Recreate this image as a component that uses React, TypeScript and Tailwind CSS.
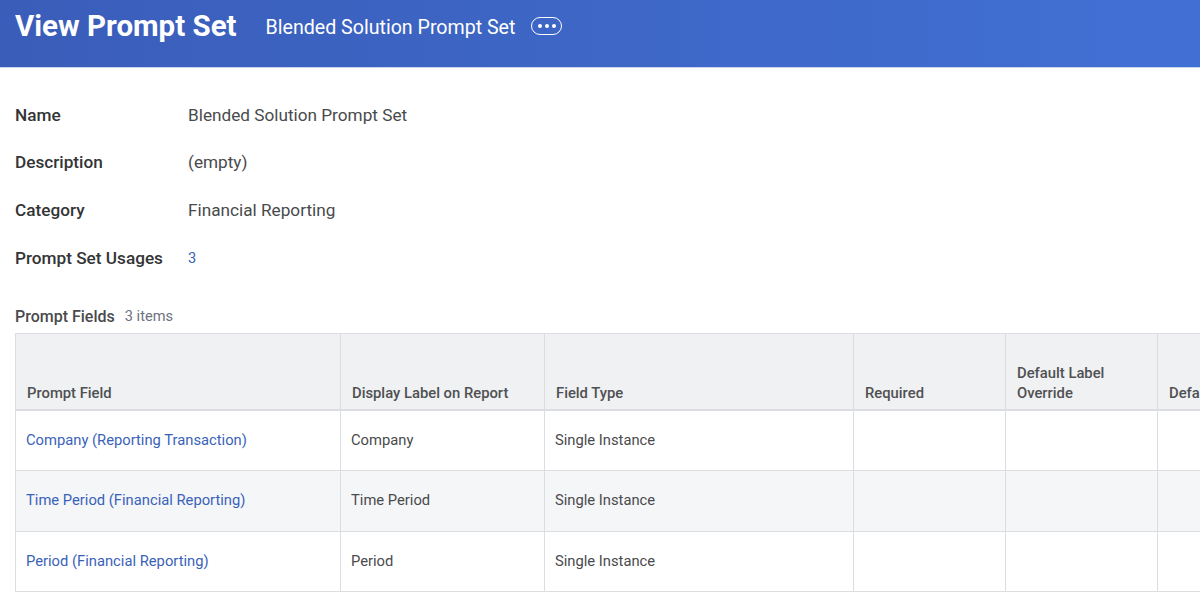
const fields = [
  { label: "Name", value: "Blended Solution Prompt Set" },
  { label: "Description", value: "(empty)" },
  { label: "Category", value: "Financial Reporting" },
];

const rows = [
  { field: "Company (Reporting Transaction)", label: "Company", height: "h-[60px]", bg: "bg-white" },
  { field: "Time Period (Financial Reporting)", label: "Time Period", height: "h-[61px]", bg: "bg-[#f5f6f8]" },
  { field: "Period (Financial Reporting)", label: "Period", height: "h-[60px]", bg: "bg-white" },
];

const colWidths = ["w-[325px]", "w-[204px]", "w-[309px]", "w-[152px]", "w-[152px]", "w-[152px]"];

function HeaderCell({ width, children }: { width: string; children: React.ReactNode }) {
  return (
    <div className={`${width} shrink-0 border-r-[1.5px] border-[#dcdde0] px-[11px] pb-[6px] text-[14.8px] leading-[20px] font-medium text-[#4f5052] flex items-end`}>
      <div>{children}</div>
    </div>
  );
}

function BodyCell({ width, children }: { width: string; children?: React.ReactNode }) {
  return (
    <div className={`${width} shrink-0 border-r-[1.5px] border-[#dcdde0] px-[10px] pb-[2px] text-[14.75px] text-[#494a4c] flex items-center`}>
      {children}
    </div>
  );
}

export default function App() {
  return (
    <div className="w-[1200px] h-[608px] overflow-hidden bg-white font-['Roboto',sans-serif]">
      {/* Header */}
      <div className="h-[68px] bg-gradient-to-r from-[#3a5db9] to-[#4170d4] border-b border-[#c9d3ea] flex items-start pl-[15px] pt-[8px]">
        <h1 className="text-[29.5px] leading-[36px] font-bold text-white">View Prompt Set</h1>
        <span className="ml-[29px] mt-[3px] text-[19.6px] leading-[34px] text-white">Blended Solution Prompt Set</span>
        <button type="button" className="ml-[16px] mt-[9px] w-[31px] h-[18px] rounded-full border-[1.5px] border-white flex items-center justify-center gap-[3px]">
          <span className="w-[4px] h-[4px] rounded-full bg-white" />
          <span className="w-[4px] h-[4px] rounded-full bg-white" />
          <span className="w-[4px] h-[4px] rounded-full bg-white" />
        </button>
      </div>

      {/* Summary fields */}
      <div className="pl-[15px] pt-[24px]">
        {fields.map((f) => (
          <div key={f.label} className="h-[47.6px] flex items-center">
            <div className="w-[173px] text-[17.2px] font-medium text-[#333436]">{f.label}</div>
            <div className="text-[17.2px] text-[#494a4c]">{f.value}</div>
          </div>
        ))}
        <div className="h-[47.6px] flex items-center">
          <div className="w-[173px] text-[17.2px] font-medium text-[#333436]">Prompt Set Usages</div>
          <a className="text-[14.6px] text-[#3a62b8]">3</a>
        </div>
      </div>

      {/* Table title */}
      <div className="pl-[15px] mt-[24px] h-[22px] flex items-center gap-[10px]">
        <span className="text-[16px] font-medium text-[#494a4c]">Prompt Fields</span>
        <span className="text-[14.6px] text-[#6b7280]">3 items</span>
      </div>

      {/* Table */}
      <div className="ml-[15px] mt-[5px] w-[1300px] border-l-[1.5px] border-t-[1.5px] border-[#dcdde0]">
        <div className="h-[77px] flex bg-[#f0f1f3] border-b-2 border-[#dcdde0]">
          <HeaderCell width={colWidths[0]}>Prompt Field</HeaderCell>
          <HeaderCell width={colWidths[1]}>Display Label on Report</HeaderCell>
          <HeaderCell width={colWidths[2]}>Field Type</HeaderCell>
          <HeaderCell width={colWidths[3]}>Required</HeaderCell>
          <HeaderCell width={colWidths[4]}>Default Label<br />Override</HeaderCell>
          <HeaderCell width={colWidths[5]}>Default</HeaderCell>
        </div>
        {rows.map((r) => (
          <div key={r.field} className={`${r.height} ${r.bg} flex border-b-[1.5px] border-[#dcdde0]`}>
            <BodyCell width={colWidths[0]}><a className="text-[#3a62b8]">{r.field}</a></BodyCell>
            <BodyCell width={colWidths[1]}>{r.label}</BodyCell>
            <BodyCell width={colWidths[2]}>Single Instance</BodyCell>
            <BodyCell width={colWidths[3]} />
            <BodyCell width={colWidths[4]} />
            <BodyCell width={colWidths[5]} />
          </div>
        ))}
      </div>
    </div>
  );
}
